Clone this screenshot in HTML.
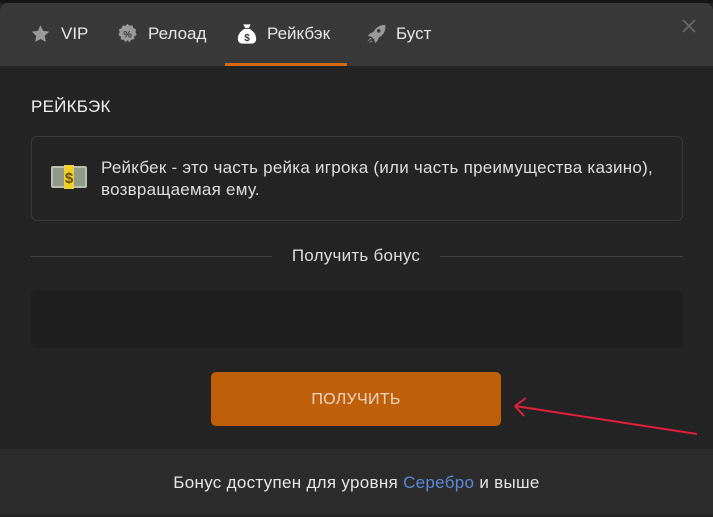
<!DOCTYPE html>
<html><head><meta charset="utf-8"><style>
*{margin:0;padding:0;box-sizing:border-box}
body{width:713px;height:515px;background:#242424;font-family:"Liberation Sans",sans-serif;position:relative;overflow:hidden;color:#e8e8e8}
.top{position:absolute;left:0;top:0;width:713px;height:3px;background:#161616}
.hdr{position:absolute;left:0;top:3px;width:713px;height:63px;background:#393939;border-radius:8px 8px 0 0}
.tab{position:absolute;top:24px;font-size:17px;color:#e6e6e6}
.ic{position:absolute}
.ul{position:absolute;left:225px;top:63px;width:122px;height:3px;background:#d26b12}
.t{position:absolute;font-size:17px;letter-spacing:0.25px}
.box{position:absolute;left:31px;top:136px;width:652px;height:85px;border:1px solid #3a3a3a;border-radius:6px}
.line{position:absolute;top:256px;height:1px;background:#444}
.dark{position:absolute;left:31px;top:290px;width:652px;height:58px;background:#1f1f1f;border-radius:6px}
.btn{position:absolute;left:211px;top:372px;width:290px;height:54px;background:#c05f0a;border-radius:5px;color:#ead8c6;font-size:16px;text-align:center;line-height:56px;letter-spacing:0.3px}
.foot{position:absolute;left:0;top:449px;width:713px;height:66px;background:#2c2c2c;text-align:center;line-height:68px;font-size:17px;letter-spacing:0.3px;color:#e6e6e6}
</style></head><body>
<div class="top"></div>
<div class="hdr"></div>
<svg class="ic" style="left:30px;top:24px" width="21" height="20" viewBox="0 0 24 24"><path fill="#9a9a9a" d="M12 1.5l3.2 6.8 7.3.9-5.4 5 1.4 7.3L12 18l-6.5 3.5 1.4-7.3-5.4-5 7.3-.9z"/></svg>
<div class="tab" style="left:61px">VIP</div>
<svg class="ic" style="left:117px;top:23px" width="21" height="21" viewBox="0 0 24 24"><path fill="#9a9a9a" d="M12 1l2.5 2.2 3.3-.5 1 3.2 3.1 1.4-.9 3.2 1.6 3-2.8 1.8-.2 3.4-3.3.3L14.3 22 12 19.6 9.7 22l-1.9-2.9-3.3-.3-.2-3.4L1.5 13.6l1.6-3-.9-3.2 3.1-1.4 1-3.2 3.3.5z"/><text x="12" y="16.5" font-size="11" text-anchor="middle" fill="#393939" font-family="Liberation Sans" font-weight="bold">%</text></svg>
<div class="tab" style="left:148px">Релоад</div>
<svg class="ic" style="left:236px;top:22px" width="22" height="23" viewBox="0 0 24 24"><path fill="#fff" d="M8 2h8l-2 4h-4zM9 7h6c5 3 7 7 7 11 0 3-2 5-5 5H7c-3 0-5-2-5-5 0-4 2-8 7-11z"/><text x="12" y="20" font-size="11" text-anchor="middle" fill="#393939" font-family="Liberation Sans" font-weight="bold">$</text></svg>
<div class="tab" style="left:267px">Рейкбэк</div>
<div class="ul"></div>
<svg class="ic" style="left:365px;top:23px" width="22" height="22" viewBox="0 0 24 24"><path fill="#9a9a9a" d="M22 2c-6 0-10 3-13 8l-3 1-3 3 4 1 3 3 1 4 3-3 1-3c5-3 8-7 7-14zM15 6.5a2 2 0 1 1 0 4 2 2 0 0 1 0-4zM2 21l4-5 1 1zM4 22l3-3 1 1z"/></svg>
<div class="tab" style="left:396px">Буст</div>
<svg class="ic" style="left:682px;top:19px" width="14" height="14" viewBox="0 0 14 14"><path d="M1 1l12 12M13 1L1 13" stroke="#6a6a6a" stroke-width="1.6"/></svg>
<div class="t" style="left:31px;top:97px;font-size:17px;color:#f2f2f2">РЕЙКБЭК</div>
<div class="box"></div>
<svg class="ic" style="left:50px;top:164px" width="38" height="26" viewBox="0 0 38 26"><rect x="1" y="2" width="36" height="22" rx="2" fill="#b8bfb0"/><rect x="3" y="4" width="32" height="18" fill="#8f9a88"/><rect x="14" y="1" width="10" height="24" fill="#f0d030"/><text x="19" y="19" font-size="15" text-anchor="middle" fill="#6a4a00" font-family="Liberation Sans" font-weight="bold">$</text></svg>
<div class="t" style="left:101px;top:157px;line-height:22px;color:#dedede;white-space:nowrap">Рейкбек - это часть рейка игрока (или часть преимущества казино),<br>возвращаемая ему.</div>
<div class="line" style="left:31px;width:241px"></div>
<div class="line" style="left:440px;width:243px"></div>
<div class="t" style="left:272px;width:168px;text-align:center;top:246px;color:#dedede">Получить бонус</div>
<div class="dark"></div>
<div class="btn">ПОЛУЧИТЬ</div>
<svg class="ic" style="left:0;top:0" width="713" height="515"><path d="M697 434L515 406M515 406l11-8M515 406l9 10" stroke="#e0213c" stroke-width="2" fill="none"/></svg>
<div class="foot">Бонус доступен для уровня <span style="color:#5b8ad8">Серебро</span> и выше</div>
</body></html>
